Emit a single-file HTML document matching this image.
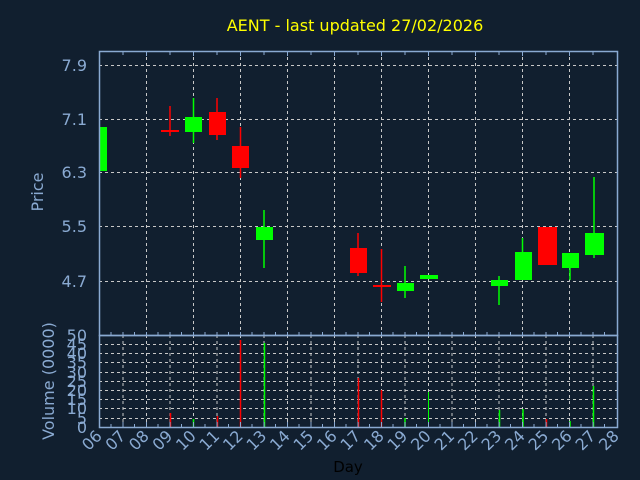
<!DOCTYPE html><html><head><style>body{margin:0;background:#111f2f}svg{display:block}</style></head><body>
<svg width="640" height="480" xmlns="http://www.w3.org/2000/svg" font-family="Liberation Sans, DejaVu Sans, sans-serif">
<rect width="640" height="480" fill="#111f2f"/>
<text x="355" y="31" fill="#ffff00" font-size="16" text-anchor="middle" font-family="DejaVu Sans, sans-serif">AENT - last updated 27/02/2026</text>
<g stroke="#c8c8c8" stroke-dasharray="3,3" stroke-width="1">
<line x1="99" y1="65.5" x2="617" y2="65.5"/><line x1="99" y1="119.5" x2="617" y2="119.5"/><line x1="99" y1="172.5" x2="617" y2="172.5"/><line x1="99" y1="226.5" x2="617" y2="226.5"/><line x1="99" y1="281.5" x2="617" y2="281.5"/>
<line x1="146.5" y1="51" x2="146.5" y2="335"/><line x1="193.5" y1="51" x2="193.5" y2="335"/><line x1="240.5" y1="51" x2="240.5" y2="335"/><line x1="287.5" y1="51" x2="287.5" y2="335"/><line x1="334.5" y1="51" x2="334.5" y2="335"/><line x1="381.5" y1="51" x2="381.5" y2="335"/><line x1="428.5" y1="51" x2="428.5" y2="335"/><line x1="475.5" y1="51" x2="475.5" y2="335"/><line x1="522.5" y1="51" x2="522.5" y2="335"/><line x1="569.5" y1="51" x2="569.5" y2="335"/>
<line x1="99" y1="344.5" x2="617" y2="344.5"/><line x1="99" y1="353.5" x2="617" y2="353.5"/><line x1="99" y1="362.5" x2="617" y2="362.5"/><line x1="99" y1="372.5" x2="617" y2="372.5"/><line x1="99" y1="381.5" x2="617" y2="381.5"/><line x1="99" y1="390.5" x2="617" y2="390.5"/><line x1="99" y1="399.5" x2="617" y2="399.5"/><line x1="99" y1="408.5" x2="617" y2="408.5"/><line x1="99" y1="418.5" x2="617" y2="418.5"/>
<line x1="123" y1="335" x2="123" y2="427"/><line x1="146.5" y1="335" x2="146.5" y2="427"/><line x1="170" y1="335" x2="170" y2="427"/><line x1="193.5" y1="335" x2="193.5" y2="427"/><line x1="217" y1="335" x2="217" y2="427"/><line x1="240.5" y1="335" x2="240.5" y2="427"/><line x1="264" y1="335" x2="264" y2="427"/><line x1="287.5" y1="335" x2="287.5" y2="427"/><line x1="311" y1="335" x2="311" y2="427"/><line x1="334.5" y1="335" x2="334.5" y2="427"/><line x1="358" y1="335" x2="358" y2="427"/><line x1="381.5" y1="335" x2="381.5" y2="427"/><line x1="405" y1="335" x2="405" y2="427"/><line x1="428.5" y1="335" x2="428.5" y2="427"/><line x1="452" y1="335" x2="452" y2="427"/><line x1="475.5" y1="335" x2="475.5" y2="427"/><line x1="499" y1="335" x2="499" y2="427"/><line x1="522.5" y1="335" x2="522.5" y2="427"/><line x1="546" y1="335" x2="546" y2="427"/><line x1="569.5" y1="335" x2="569.5" y2="427"/><line x1="593" y1="335" x2="593" y2="427"/>
</g>
<g stroke-width="1.5">
<rect x="99" y="127" width="8" height="44" fill="#00ff00"/>
<line x1="170" y1="106" x2="170" y2="136" stroke="#ff0000"/><rect x="161" y="130" width="18" height="2" fill="#ff0000"/>
<line x1="193.5" y1="98" x2="193.5" y2="143" stroke="#00ff00"/><rect x="185" y="117" width="17" height="15" fill="#00ff00"/>
<line x1="217" y1="98" x2="217" y2="140" stroke="#ff0000"/><rect x="209" y="112" width="17" height="23" fill="#ff0000"/>
<line x1="240.5" y1="127" x2="240.5" y2="178" stroke="#ff0000"/><rect x="232" y="146" width="17" height="22" fill="#ff0000"/>
<line x1="264" y1="210" x2="264" y2="268" stroke="#00ff00"/><rect x="256" y="227" width="17" height="13" fill="#00ff00"/>
<line x1="358" y1="233" x2="358" y2="276" stroke="#ff0000"/><rect x="350" y="248" width="17" height="25" fill="#ff0000"/>
<line x1="381.5" y1="249" x2="381.5" y2="302" stroke="#ff0000"/><rect x="373" y="285" width="18" height="2" fill="#ff0000"/>
<line x1="405" y1="266" x2="405" y2="298" stroke="#00ff00"/><rect x="397" y="283" width="17" height="8" fill="#00ff00"/>
<rect x="420" y="275" width="18" height="4" fill="#00ff00"/>
<line x1="499" y1="276" x2="499" y2="305" stroke="#00ff00"/><rect x="491" y="280" width="17" height="6" fill="#00ff00"/>
<line x1="522.5" y1="238" x2="522.5" y2="280" stroke="#00ff00"/><rect x="515" y="252" width="17" height="28" fill="#00ff00"/>
<rect x="538" y="227" width="19" height="38" fill="#ff0000"/>
<line x1="570" y1="253" x2="570" y2="280" stroke="#00ff00"/><rect x="562" y="253" width="17" height="15" fill="#00ff00"/>
<line x1="594" y1="177" x2="594" y2="258" stroke="#00ff00"/><rect x="585" y="233" width="19" height="22" fill="#00ff00"/>
</g>
<g stroke-width="1.5">
<line x1="170.5" y1="413" x2="170.5" y2="427" stroke="#ff0000"/>
<line x1="193.5" y1="419" x2="193.5" y2="427" stroke="#00ff00"/>
<line x1="217.5" y1="416" x2="217.5" y2="427" stroke="#ff0000"/>
<line x1="240.5" y1="340" x2="240.5" y2="427" stroke="#ff0000"/>
<line x1="264.5" y1="343" x2="264.5" y2="427" stroke="#00ff00"/>
<line x1="358.5" y1="378" x2="358.5" y2="427" stroke="#ff0000"/>
<line x1="381.5" y1="390" x2="381.5" y2="427" stroke="#ff0000"/>
<line x1="405" y1="418" x2="405" y2="427" stroke="#00ff00"/>
<line x1="428.5" y1="392" x2="428.5" y2="427" stroke="#00ff00" stroke-width="1"/>
<line x1="499.5" y1="410" x2="499.5" y2="427" stroke="#00ff00"/>
<line x1="523" y1="409" x2="523" y2="427" stroke="#00ff00"/>
<line x1="546.5" y1="419" x2="546.5" y2="427" stroke="#ff0000"/>
<line x1="570" y1="421" x2="570" y2="427" stroke="#00ff00"/>
<line x1="593.5" y1="386" x2="593.5" y2="427" stroke="#00ff00"/>
</g>
<g stroke="#8aaad2" fill="none" stroke-width="1.5">
<rect x="99.5" y="51.5" width="518" height="284"/>
<rect x="99.5" y="335.5" width="518" height="92"/>
</g>
<g stroke="#8aaad2" stroke-width="1">
<path d="M123 51v4M146.5 51v5M170 51v4M193.5 51v5M217 51v4M240.5 51v5M264 51v4M287.5 51v5M311 51v4M334.5 51v5M358 51v4M381.5 51v5M405 51v4M428.5 51v5M452 51v4M475.5 51v5M499 51v4M522.5 51v5M546 51v4M569.5 51v5M593 51v4"/>
<path d="M111 335v-3M123 335v-3M134.5 335v-3M146.5 335v-3M158 335v-3M170 335v-3M181.5 335v-3M193.5 335v-3M205 335v-3M217 335v-3M228.5 335v-3M240.5 335v-3M252 335v-3M264 335v-3M275.5 335v-3M287.5 335v-3M299 335v-3M311 335v-3M322.5 335v-3M334.5 335v-3M346 335v-3M358 335v-3M369.5 335v-3M381.5 335v-3M393 335v-3M405 335v-3M416.5 335v-3M428.5 335v-3M440 335v-3M452 335v-3M463.5 335v-3M475.5 335v-3M487 335v-3M499 335v-3M510.5 335v-3M522.5 335v-3M534 335v-3M546 335v-3M557.5 335v-3M569.5 335v-3M581 335v-3M593 335v-3M604.5 335v-3"/>
<path d="M111 427v-3M123 427v-5M134.5 427v-3M146.5 427v-5M158 427v-3M170 427v-5M181.5 427v-3M193.5 427v-5M205 427v-3M217 427v-5M228.5 427v-3M240.5 427v-5M252 427v-3M264 427v-5M275.5 427v-3M287.5 427v-5M299 427v-3M311 427v-5M322.5 427v-3M334.5 427v-5M346 427v-3M358 427v-5M369.5 427v-3M381.5 427v-5M393 427v-3M405 427v-5M416.5 427v-3M428.5 427v-5M440 427v-3M452 427v-5M463.5 427v-3M475.5 427v-5M487 427v-3M499 427v-5M510.5 427v-3M522.5 427v-5M534 427v-3M546 427v-5M557.5 427v-3M569.5 427v-5M581 427v-3M593 427v-5M604.5 427v-3"/>
</g>
<g fill="#8aaad2" font-size="16" text-anchor="end" font-family="DejaVu Sans, sans-serif">
<text x="87" y="71">7.9</text><text x="87" y="125">7.1</text><text x="87" y="178">6.3</text><text x="87" y="232">5.5</text><text x="87" y="287">4.7</text>
<text x="87" y="341">50</text><text x="87" y="350">45</text><text x="87" y="359">40</text><text x="87" y="368">35</text><text x="87" y="378">30</text><text x="87" y="387">25</text><text x="87" y="396">20</text><text x="87" y="405">15</text><text x="87" y="414">10</text><text x="87" y="424">5</text><text x="87" y="433">0</text>
</g>
<g fill="#8aaad2" font-size="16" font-family="DejaVu Sans, sans-serif" text-anchor="middle">
<text transform="translate(43,192) rotate(-90)">Price</text>
<text transform="translate(54,381) rotate(-90)">Volume (0000)</text>
<text x="348" y="472" fill="#000000" font-size="15">Day</text>
</g>
<g fill="#8aaad2" font-size="16" text-anchor="end" font-family="DejaVu Sans, sans-serif">
<text transform="translate(103,437) rotate(-45)">06</text>
<text transform="translate(126.5,437) rotate(-45)">07</text>
<text transform="translate(150,437) rotate(-45)">08</text>
<text transform="translate(173.5,437) rotate(-45)">09</text>
<text transform="translate(197,437) rotate(-45)">10</text>
<text transform="translate(220.5,437) rotate(-45)">11</text>
<text transform="translate(244,437) rotate(-45)">12</text>
<text transform="translate(267.5,437) rotate(-45)">13</text>
<text transform="translate(291,437) rotate(-45)">14</text>
<text transform="translate(314.5,437) rotate(-45)">15</text>
<text transform="translate(338,437) rotate(-45)">16</text>
<text transform="translate(361.5,437) rotate(-45)">17</text>
<text transform="translate(385,437) rotate(-45)">18</text>
<text transform="translate(408.5,437) rotate(-45)">19</text>
<text transform="translate(432,437) rotate(-45)">20</text>
<text transform="translate(455.5,437) rotate(-45)">21</text>
<text transform="translate(479,437) rotate(-45)">22</text>
<text transform="translate(502.5,437) rotate(-45)">23</text>
<text transform="translate(526,437) rotate(-45)">24</text>
<text transform="translate(549.5,437) rotate(-45)">25</text>
<text transform="translate(573,437) rotate(-45)">26</text>
<text transform="translate(596.5,437) rotate(-45)">27</text>
<text transform="translate(620,437) rotate(-45)">28</text>
</g>
</svg>
</body></html>
